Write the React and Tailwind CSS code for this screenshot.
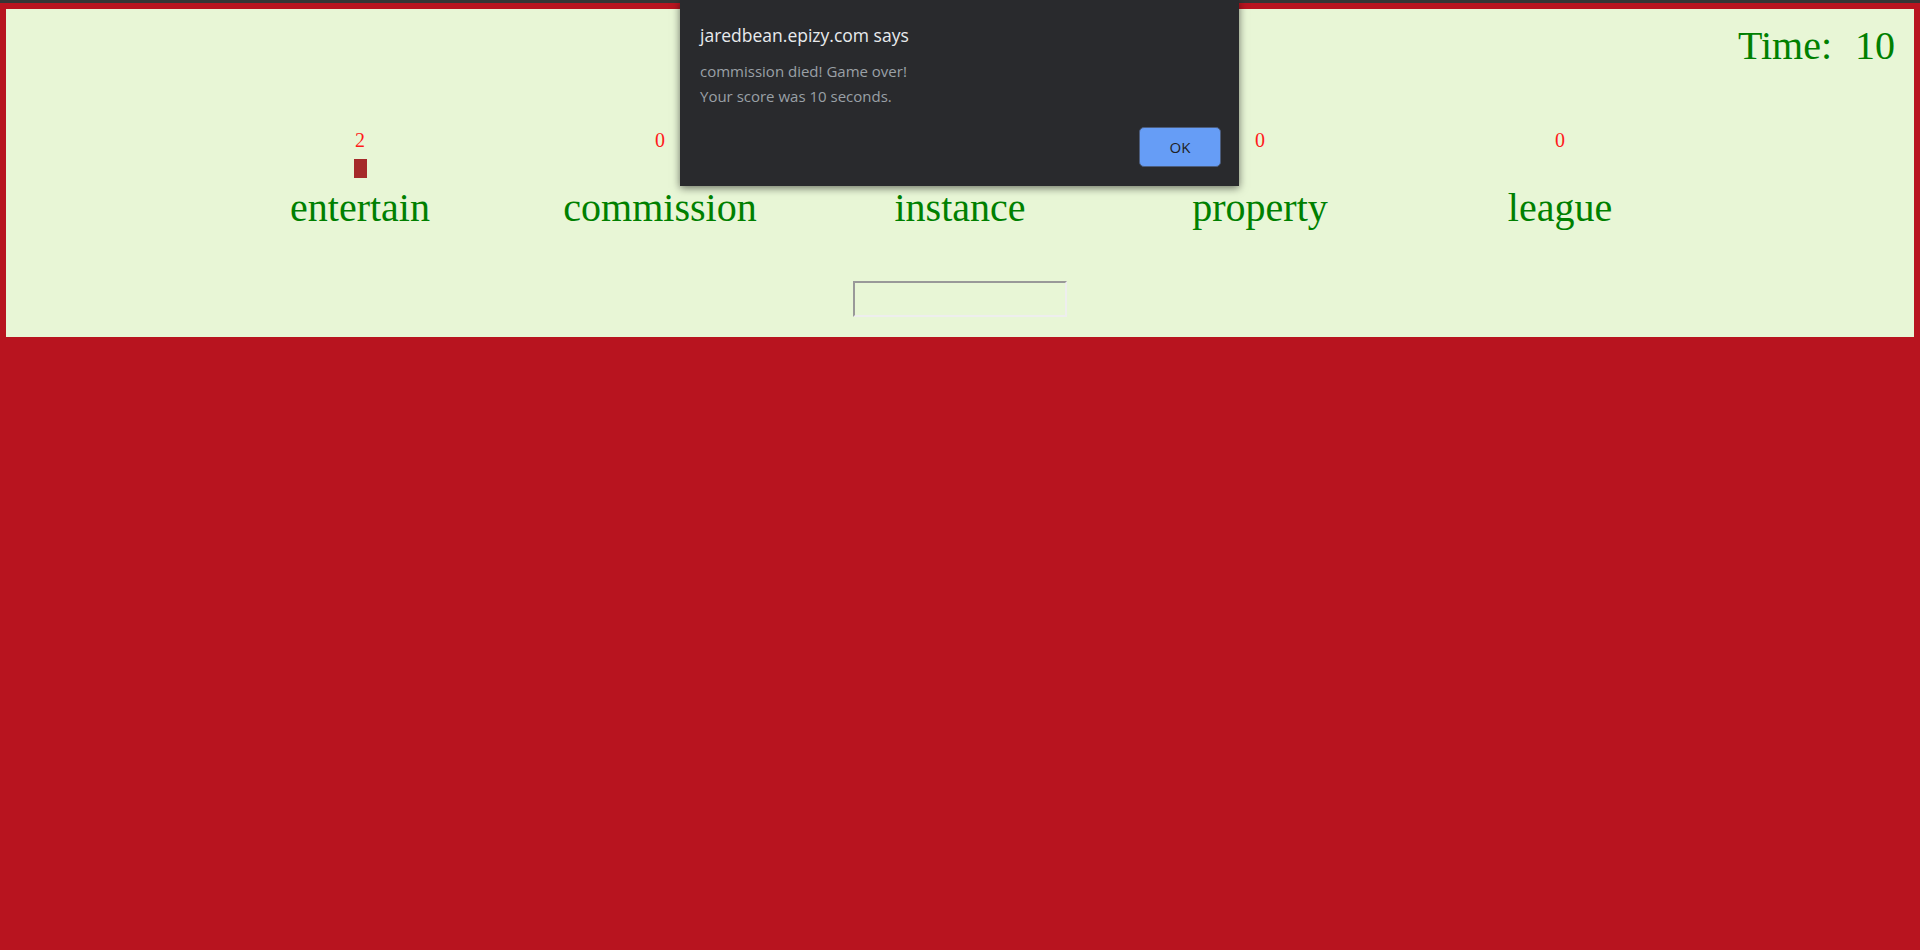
const words = [
    { word: "entertain", count: 2, bar: true },
    { word: "commission", count: 0 },
    { word: "instance", count: 0 },
    { word: "property", count: 0 },
    { word: "league", count: 0 },
]

const GameOverAlert = () => {
    return (
        <div className="absolute top-0 left-[680px] w-[559px] h-[186px] bg-[#292a2d] shadow-[0_2px_8px_rgba(0,0,0,0.55)] font-['Open_Sans',sans-serif] pl-[20px] pr-[18px]">
            <p className="pt-[23px] text-[17.5px] leading-[24px] text-[#e8eaed]">jaredbean.epizy.com says</p>
            <p className="mt-[12px] text-[15px] leading-[25px] text-[#9aa0a6]">commission died! Game over!</p>
            <p className="text-[15px] leading-[25px] text-[#9aa0a6]">Your score was 10 seconds.</p>
            <div className="flex justify-end mt-[18px]">
                <button className="w-[82px] h-[40px] rounded-[5px] bg-[#669df6] border border-[#4b5c7c] text-[15px] text-[#202124]">OK</button>
            </div>
        </div>
    )
}

const App = () => {
    return (
        <div className="relative min-h-screen bg-[#b8141f] font-['Liberation_Serif',serif]">
            <div className="h-[3px] bg-[#353535]"></div>
            <div className="p-[6px]">
                <div className="bg-[#e8f6d6] pt-[14px] pb-[20px]">
                    <div className="flex justify-end pr-[19px]">
                        <p className="text-[40px] leading-[46px] text-[#008000]">Time:&nbsp;&nbsp;<span className="ml-[3px]">10</span></p>
                    </div>
                    <div className="flex justify-center mt-[60px]">
                        {words.map((w) => (
                            <div key={w.word} className="w-[300px] flex flex-col items-center">
                                <span className="text-[20px] leading-[23px] text-[#ff1a1a]">{w.count}</span>
                                <div className="h-[33px] pt-[7px]">
                                    {w.bar && <div className="w-[13px] h-[19px] bg-[#a52a2a]"></div>}
                                </div>
                                <span className="text-[40px] leading-[46px] text-[#008000]">{w.word}</span>
                            </div>
                        ))}
                    </div>
                    <div className="flex justify-center mt-[50px]">
                        <input type="text" className="w-[214px] h-[36px] bg-transparent border-2 border-t-[#999999] border-l-[#999999] border-r-[#eeeeee] border-b-[#eeeeee] outline-none" />
                    </div>
                </div>
            </div>
            <GameOverAlert />
        </div>
    )
}

export default App
